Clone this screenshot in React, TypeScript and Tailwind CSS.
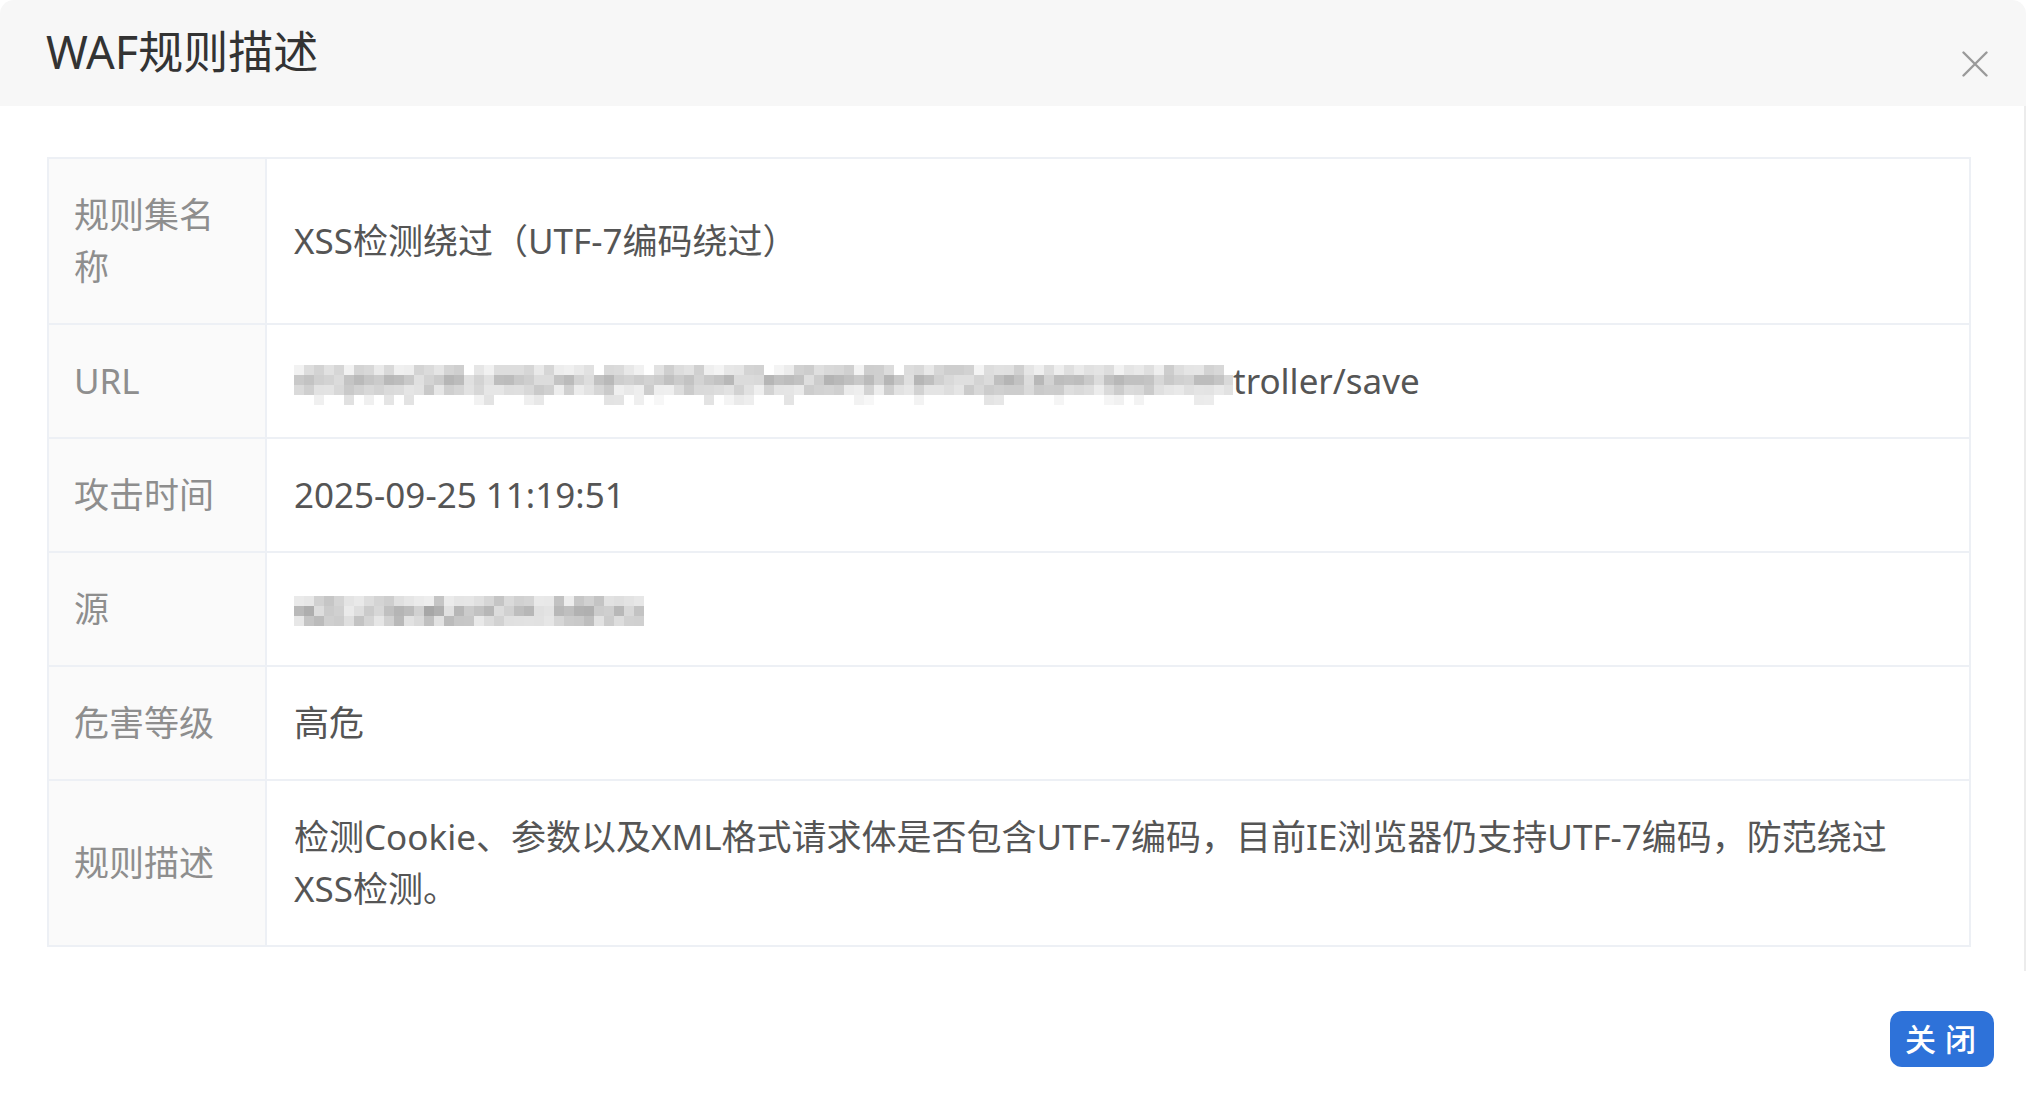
import React from 'react'

// deterministic pseudo random so the mosaic stays the same every render
function seeded(seed: number) {
  let s = seed
  return () => {
    s = (s * 9301 + 49297) % 233280
    return s / 233280
  }
}

function Mosaic({ cols, rows, seed, top, ranges, width }: {
  cols: number
  rows: number
  seed: number
  top: number
  ranges: [number, number, number][]
  width: number
}) {
  const rnd = seeded(seed)
  const cells: React.ReactNode[] = []
  for (let r = 0; r < rows; r++) {
    const [lo, hi, fill] = ranges[r]
    for (let c = 0; c < cols; c++) {
      if (rnd() > fill) continue
      const v = Math.round(lo + (hi - lo) * rnd())
      cells.push(
        <rect key={`${r}-${c}`} x={c * 10} y={top + r * 10} width={10} height={10} fill={`rgb(${v},${v},${v})`} />
      )
    }
  }
  return (
    <svg width={width} height={52} className="block shrink-0">
      {cells}
    </svg>
  )
}

const rows: { label: string; value: React.ReactNode }[] = [
  { label: '规则集名称', value: 'XSS检测绕过（UTF-7编码绕过）' },
  {
    label: 'URL',
    value: (
      <div className="flex items-start whitespace-nowrap">
        <Mosaic
          cols={94}
          rows={4}
          seed={17}
          top={10}
          width={939}
          ranges={[
            [205, 245, 0.95],
            [180, 225, 1],
            [200, 240, 1],
            [225, 250, 0.25],
          ]}
        />
        <span>troller/save</span>
      </div>
    ),
  },
  { label: '攻击时间', value: '2025-09-25 11:19:51' },
  {
    label: '源',
    value: (
      <Mosaic
        cols={35}
        rows={3}
        seed={5}
        top={13}
        width={350}
        ranges={[
          [190, 240, 1],
          [165, 235, 1],
          [185, 235, 1],
        ]}
      />
    ),
  },
  { label: '危害等级', value: '高危' },
  {
    label: '规则描述',
    value:
      '检测Cookie、参数以及XML格式请求体是否包含UTF-7编码，目前IE浏览器仍支持UTF-7编码，防范绕过XSS检测。',
  },
]

function CloseIcon() {
  return (
    <svg width="26" height="26" viewBox="0 0 26 26" fill="none" stroke="#9a9a9a" strokeWidth={2.4} strokeLinecap="round">
      <path d="M1.5 1.5L24.5 24.5M24.5 1.5L1.5 24.5" />
    </svg>
  )
}

export default function App() {
  return (
    <div className="w-[2026px] h-[1106px] bg-white font-['Noto_Sans','Noto_Sans_CJK_SC',sans-serif]">
      <div className="relative h-full rounded-t-[14px] bg-white">
        {/* Header */}
        <div className="flex h-[106px] justify-between rounded-t-[14px] bg-[#f7f7f7] pl-[46px] pr-[38px]">
          <h2 className="pt-[19px] text-[45px] leading-[66px] text-[#333333] font-normal">WAF规则描述</h2>
          <button className="mt-[51px] self-start h-[26px]" aria-label="close">
            <CloseIcon />
          </button>
        </div>

        {/* Body */}
        <div className="border-r-2 border-[#ececec] pl-[47px] pr-[53px] pt-[51px] pb-[24px]">
          <table className="w-full border-collapse border-2 border-[#edf0f5] text-[35px] leading-[52px]">
            <tbody>
              {rows.map((row) => (
                <tr key={row.label} className="border-b-2 border-[#edf0f5]">
                  <th className="w-[218px] border-r-2 border-[#edf0f5] bg-[#fafafa] pl-[25px] pr-[28px] py-[30px] text-left align-middle font-normal text-[#8e8e8e]">
                    {row.label}
                  </th>
                  <td className="pl-[27px] pr-[40px] py-[30px] align-middle text-[#555555]">{row.value}</td>
                </tr>
              ))}
            </tbody>
          </table>
        </div>

        {/* Footer */}
        <div className="flex justify-end pr-[32px] pt-[40px]">
          <button className="h-[56px] w-[104px] rounded-[12px] bg-[#2e72d9] pl-[6px] text-[31px] font-medium tracking-[9px] text-white">
            关闭
          </button>
        </div>
      </div>
    </div>
  )
}
